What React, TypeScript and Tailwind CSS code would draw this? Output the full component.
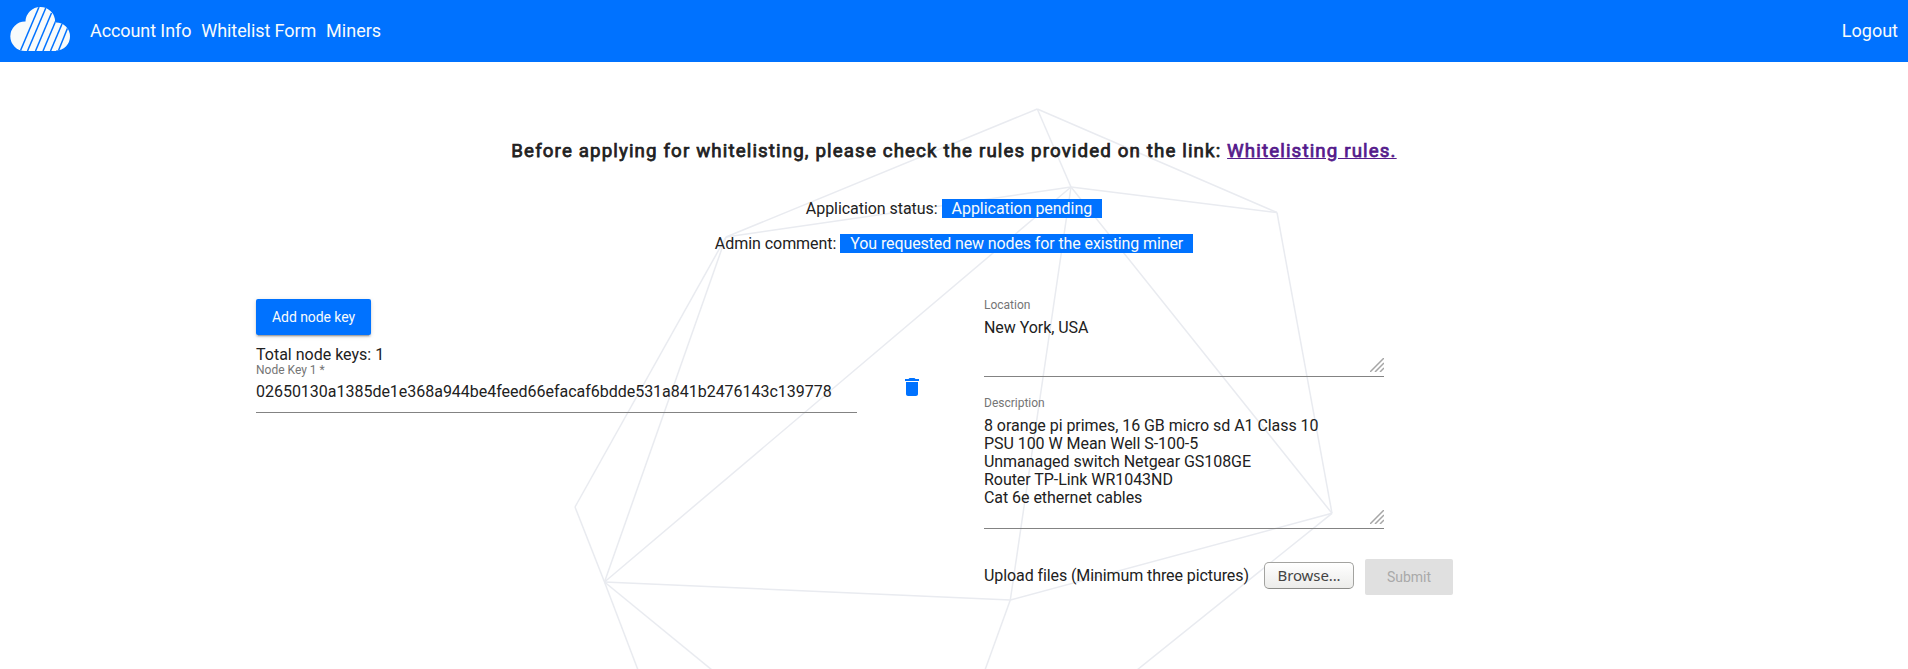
import type { ReactNode } from "react";

const edges: [number, number, number, number][] = [
  [1037.3, 109, 726, 237],
  [1037.3, 109, 1071, 187],
  [1037.3, 109, 1277, 212.5],
  [1071, 187, 726, 237],
  [1071, 187, 1277, 212.5],
  [1071, 187, 604.5, 582],
  [1071, 187, 1010.3, 600],
  [1071, 187, 1332, 513.3],
  [1277, 212.5, 1332, 513.3],
  [726, 237, 575, 507],
  [726, 237, 604.5, 582],
  [575, 507, 604.5, 582],
  [604.5, 582, 638, 670],
  [604.5, 582, 712, 670],
  [604.5, 582, 1010.3, 600],
  [1010.3, 600, 1332, 513.3],
  [1010.3, 600, 985, 670],
  [1332, 513.3, 1137, 670],
];

function Backdrop() {
  return (
    <svg className="pointer-events-none absolute inset-0 -z-10" width="1908" height="669" viewBox="0 0 1908 669">
      <g stroke="#e9ebf0" strokeWidth="1.5">
        {edges.map(([x1, y1, x2, y2], i) => (
          <line key={i} x1={x1} y1={y1} x2={x2} y2={y2} />
        ))}
      </g>
    </svg>
  );
}

function Logo() {
  return (
    <svg width="60" height="46" viewBox="0 0 60 46" className="block">
      <defs>
        <clipPath id="cloud">
          <circle cx="15" cy="29.3" r="14.7" />
          <circle cx="30.3" cy="14.8" r="14.8" />
          <circle cx="46" cy="29.5" r="14" />
          <rect x="15" y="20" width="31" height="24" />
        </clipPath>
      </defs>
      <g clipPath="url(#cloud)">
        <rect width="60" height="44" fill="#f8fbfb" />
        <g stroke="#0072ff" strokeWidth="1.5">
          <path d="M10.3 44 29 0" />
          <path d="M17.5 44 35.8 1" />
          <path d="M25.5 44 41.5 6" />
          <path d="M33 44 45.7 14" />
          <path d="M40.5 44 52.6 15.5" />
          <path d="M48.3 44 58 20" />
        </g>
      </g>
    </svg>
  );
}

function Grip() {
  return (
    <svg className="absolute right-0 bottom-[4px]" width="14" height="14" viewBox="0 0 14 14">
      <path d="M0 14 14 0M5 14l9-9M10 14l4-4" stroke="#a6a6a6" strokeWidth="1.5" fill="none" />
    </svg>
  );
}

function Area({ label, className, children }: { label: string; className: string; children: ReactNode }) {
  return (
    <div className={`relative w-[400px] border-b border-[#838383] ${className}`}>
      <div className="text-xs leading-[14px] text-[#757575]">{label}</div>
      <div className="mt-[7px] whitespace-pre-line text-base leading-[18px] tracking-[-0.05px]">{children}</div>
      <Grip />
    </div>
  );
}

function Status({ label, className, children }: { label: string; className: string; children: ReactNode }) {
  return (
    <div className="flex h-[19px] gap-1 text-base leading-[19px]">
      <span className="tracking-[-0.05px]">{label}</span>
      <span className={`bg-[#0072ff] px-[10px] text-[#f8fbfb] ${className}`}>{children}</span>
    </div>
  );
}

export default function App() {
  return (
    <div className="relative isolate h-[669px] w-[1908px] overflow-hidden bg-white font-['Roboto',sans-serif] text-[#212121]">
      <Backdrop />
      <header className="flex h-[62px] items-center bg-[#0072ff] pr-[10px] pl-[10px] text-lg text-[#f8fbfb]">
        <div className="mt-[-2px] w-20">
          <Logo />
        </div>
        <nav className="flex gap-[10px] tracking-[-0.09px]">
          <a>Account Info</a>
          <a>Whitelist Form</a>
          <a className="tracking-normal">Miners</a>
        </nav>
        <a className="ml-auto">Logout</a>
      </header>

      <h1 className="mt-[77px] text-center text-[18.72px] leading-6 tracking-[1.13px] [-webkit-text-stroke:0.75px]">
        Before applying for whitelisting, please check the rules provided on the link:{" "}
        <a className="text-[#551a8b] underline">Whitelisting rules.</a>
      </h1>

      <div className="mt-[36px] flex flex-col items-center gap-4">
        <Status label="Application status:" className="tracking-[-0.04px]">Application pending</Status>
        <Status label="Admin comment:" className="tracking-[-0.11px]">You requested new nodes for the existing miner</Status>
      </div>

      <main className="mt-[46px] flex pl-[256px]">
        <section className="w-[728px]">
          <button className="block h-9 w-[115px] rounded-xs bg-[#0072ff] text-sm tracking-[-0.08px] text-[#f8fbfb] shadow-[0_3px_1px_-2px_rgba(0,0,0,0.2),0_2px_2px_0_rgba(0,0,0,0.14),0_1px_5px_0_rgba(0,0,0,0.12)]">
            Add node key
          </button>
          <div className="mt-[10px] text-base leading-[19px]">Total node keys: 1</div>
          <div className="flex">
            <div className="h-[49px] w-[601px] border-b border-[#838383]">
              <div className="mt-[-1px] text-xs leading-[14px] text-[#757575]">Node Key 1 *</div>
              <div className="mt-[6px] text-base leading-[18px] tracking-[-0.018px]">
                02650130a1385de1e368a944be4feed66efacaf6bdde531a841b2476143c139778
              </div>
            </div>
            <svg className="mt-[11px] ml-[43px]" width="24" height="24" viewBox="0 0 24 24" fill="#0072ff">
              <path d="M6 19c0 1.1.9 2 2 2h8c1.1 0 2-.9 2-2V7H6v12zM19 4h-3.500l-1-1h-5l-1 1H5v2h14V4z" />
            </svg>
          </div>
        </section>

        <section>
          <Area label="Location" className="mt-[-1px] h-[79px]">New York, USA</Area>
          <Area label="Description" className="mt-[19px] h-[133px]">
            {"8 orange pi primes, 16 GB micro sd A1 Class 10\nPSU 100 W Mean Well S-100-5\nUnmanaged switch Netgear GS108GE\nRouter TP-Link WR1043ND\nCat 6e ethernet cables"}
          </Area>
          <div className="mt-[30px] flex h-9 items-center">
            <span className="mt-[-2px] w-[280px] text-base tracking-[-0.09px]">Upload files (Minimum three pictures)</span>
            <button className="mt-[-3px] h-[27px] w-[90px] rounded-[5px] border border-[#a3a3a0] border-b-[#8b8b88] bg-linear-to-b from-white to-[#ececea] font-['Noto_Sans',sans-serif] text-[15px] leading-none tracking-[-0.1px] text-[#444]">
              Browse...
            </button>
            <button className="ml-[11px] h-9 w-[88px] rounded-xs bg-[#e0e0e0] text-sm text-[#a9a9a9]">Submit</button>
          </div>
        </section>
      </main>
    </div>
  );
}
